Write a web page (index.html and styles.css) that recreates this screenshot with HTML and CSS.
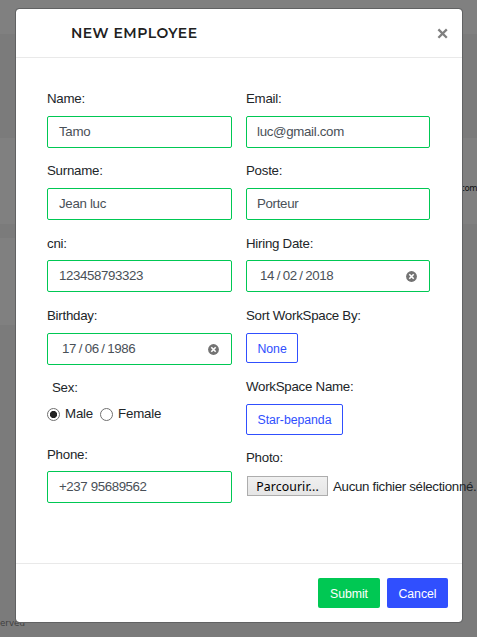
FILE: index.html
```html
<!DOCTYPE html>
<html lang="fr">
<head>
<meta charset="utf-8">
<title>New employee</title>
<link rel="stylesheet" href="styles.css">
</head>
<body>
<div class="page">
  <span class="page-email">com</span>
  <span class="page-rights">erved</span>
</div>
<section class="modal">
  <header class="modal-header">
    <h1 class="title">NEW EMPLOYEE</h1>
    <svg class="close" width="11" height="11" viewBox="0 0 11 11"><path d="M1.4 1.4 9.8 9.8M9.8 1.4 1.4 9.8" stroke="#808080" stroke-width="2.3" fill="none"/></svg>
  </header>
  <div class="modal-body">
    <div class="column column-left">
      <div class="field"><label><span>Name:</span></label><div class="input"><span>Tamo</span></div></div>
      <div class="field"><label><span>Surname:</span></label><div class="input"><span>Jean luc</span></div></div>
      <div class="field field-tight"><label><span>cni:</span></label><div class="input"><span class="digits">123458793323</span></div></div>
      <div class="field"><label><span>Birthday:</span></label><div class="input date"><span class="digits">17<i>/</i>06<i>/</i>1986</span><svg width="11" height="11" viewBox="0 0 11 11"><circle cx="5.5" cy="5.5" r="5.4" fill="#737373"/><path d="M3.3 3.3 7.7 7.7M7.7 3.3 3.3 7.7" stroke="#fff" stroke-width="1.6"/></svg></div></div>
      <div class="field sex"><label><span>Sex:</span></label>
        <div class="radios"><b class="radio checked"></b><span class="male">Male</span><b class="radio"></b><span>Female</span></div>
      </div>
      <div class="field field-tight phone"><label><span>Phone:</span></label><div class="input"><span class="digits">+237 95689562</span></div></div>
    </div>
    <div class="column column-right">
      <div class="field"><label><span>Email:</span></label><div class="input"><span>luc@gmail.com</span></div></div>
      <div class="field"><label><span>Poste:</span></label><div class="input"><span>Porteur</span></div></div>
      <div class="field field-tight"><label><span>Hiring Date:</span></label><div class="input date"><span class="digits">14<i>/</i>02<i>/</i>2018</span><svg width="11" height="11" viewBox="0 0 11 11"><circle cx="5.5" cy="5.5" r="5.4" fill="#737373"/><path d="M3.3 3.3 7.7 7.7M7.7 3.3 3.3 7.7" stroke="#fff" stroke-width="1.6"/></svg></div></div>
      <div class="field"><label><span>Sort WorkSpace By:</span></label><div class="choice none"><span>None</span></div></div>
      <div class="field"><label><span>WorkSpace Name:</span></label><div class="choice workspace"><span>Star-bepanda</span></div></div>
      <div class="field photo"><label><span>Photo:</span></label><div class="file"><span class="browse"><span>Parcourir...</span></span><span class="file-name">Aucun fichier sélectionné.</span></div></div>
    </div>
  </div>
  <footer class="modal-footer">
    <div class="button submit"><span>Submit</span></div>
    <div class="button cancel"><span>Cancel</span></div>
  </footer>
</section>
</body>
</html>
```
FILE: styles.css
```css
* { box-sizing: border-box; }

body {
  margin: 0;
  width: 477px;
  height: 637px;
  overflow: hidden;
  padding: 8px 14px 14px 15px;
  font: 13.3px/16px "Liberation Sans", Arial, sans-serif;
  letter-spacing: -.26px;
  color: #212529;
  position: relative;
}

/* Dimmed page behind the dialog */
.page {
  position: absolute;
  inset: 0;
  background:
    linear-gradient(#808080 34px, #7b7b7b 34px 138px, #808080 138px 224px, #7b7b7b 224px 238px, #808080 238px 325px, #7b7b7b 325px) 0 0 / 240px 637px no-repeat,
    linear-gradient(#808080 34px, #7b7b7b 34px 138px, #808080 138px 224px, #7b7b7b 224px) 240px 0 / 237px 637px no-repeat;
}

.page-email, .page-rights {
  position: absolute;
  font: 9px/12px "DejaVu Sans", sans-serif;
  letter-spacing: 0;
}
.page-email { right: 0; top: 182px; font-size: 8.5px; letter-spacing: -.5px; color: #111; }
.page-rights { left: 0; top: 617px; font-size: 8.7px; color: #404040; }

.modal {
  position: relative;
  width: 448px;
  height: 615px;
  background: #fff;
  background-clip: padding-box;
  border: 1px solid #616263;
  border-radius: 4px;
  display: flex;
  flex-direction: column;
}

.modal-header {
  height: 49px;
  border-bottom: 1px solid #e9e9e9;
  display: flex;
  justify-content: space-between;
  padding: 16px 14px 0 55px;
}
.title {
  margin: 0;
  font: 600 14px/16px Montserrat, Inter, sans-serif;
  letter-spacing: .5px;
  color: #212121;
}
.close { margin-top: 3px; }

.modal-body {
  flex: 1;
  display: flex;
  gap: 14px;
  padding: 32px 31px 0;
}
.column { display: flex; flex-direction: column; }
.column-left { width: 185px; }
.column-right { width: 184px; }

.field { margin-bottom: 14px; }
.field:nth-child(2) { margin-bottom: 15px; }
label { display: block; height: 26px; padding-top: 1px; white-space: nowrap; }
.field-tight label { height: 25px; }
.column .field-tight { margin-bottom: 15px; }

.input {
  height: 32px;
  border: 1px solid #00c853;
  border-radius: 2px;
  padding: 0 11px;
  display: flex;
  align-items: center;
  color: #495057;
}
.input > span { letter-spacing: -.32px; }
.column-right .input { padding-left: 10px; }
.input > .digits { letter-spacing: -.4px; }
.input.date { padding: 0 12px 0 14px; justify-content: space-between; }
.column-right .input.date { padding-left: 13px; }
.date i { font-style: normal; margin: 0 2.7px; }

.column .sex label { padding-left: 5px; height: 27px; }
.column .sex { height: 67px; margin: 0; }
.radios { display: flex; align-items: center; height: 16px; letter-spacing: -.2px; }
.radio {
  width: 13px;
  height: 13px;
  border: 1px solid #707070;
  border-radius: 50%;
  margin-right: 5px;
}
.checked { background: radial-gradient(circle, #222 3.2px, #fff 4px); }
.male { margin-right: 7px; }

.choice {
  height: 30px;
  border: 1px solid #304ffe;
  border-radius: 2px;
  color: #304ffe;
  font-size: 12.3px;
  letter-spacing: -.05px;
  padding: 1px 0 0 10.5px;
  display: flex;
  align-items: center;
}
.none { width: 52px; margin-bottom: 15px; }
.field:has(.none) { margin-bottom: 0; }
.workspace { width: 97px; height: 31px; }
.photo label { height: 27px; }

.file { display: flex; align-items: center; margin-left: 1px; white-space: nowrap; }
.browse {
  width: 81px;
  height: 20px;
  flex: none;
  border: 1px solid #adadad;
  background: linear-gradient(#f0f0f0, #e5e5e5);
  font: 12.3px/20px "Noto Sans", sans-serif;
  letter-spacing: .1px;
  color: #000;
  text-align: center;
  margin-right: 5px;
}
.file-name { letter-spacing: -.31px; padding-top: 2px; }

.modal-footer {
  height: 59px;
  border-top: 1px solid #e9e9e9;
  display: flex;
  justify-content: flex-end;
  gap: 7px;
  padding: 14px 14px 0;
}
.button {
  height: 30px;
  border-radius: 2px;
  color: #fff;
  font-size: 12.3px;
  letter-spacing: -.05px;
  display: flex;
  align-items: center;
  justify-content: center;
  padding-top: 1px;
}
.submit { width: 62px; background: #00c853; }
.cancel { width: 61px; background: #304ffe; }
```
